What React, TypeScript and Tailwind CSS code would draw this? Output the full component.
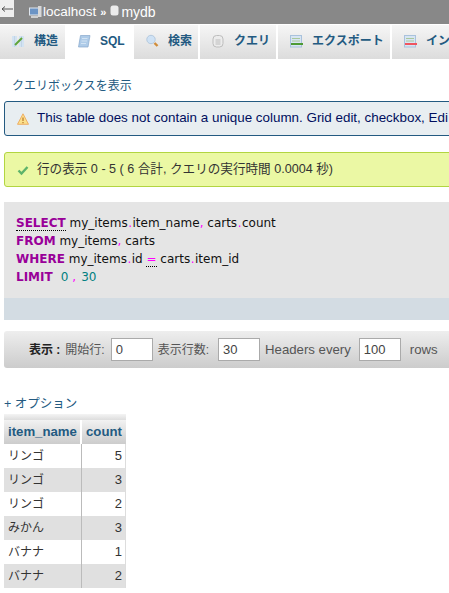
import React from "react";

const cjk = "font-['Liberation_Sans','Noto_Sans_CJK_JP',sans-serif]";

function TabIcon({ name }: { name: string }) {
  if (name === "struct")
    return (
      <svg width="16" height="16" viewBox="0 0 16 16">
        <rect x="2" y="3" width="5" height="11" fill="#d3e3f2" />
        <rect x="9" y="3" width="5" height="11" fill="#d3e3f2" />
        <path d="M4.500 3v11M11.500 3v11" stroke="#b9cee2" strokeWidth="0.7" />
        <path d="M5 12 L12 5" stroke="#5fa53a" strokeWidth="2" />
      </svg>
    );
  if (name === "sql")
    return (
      <svg width="16" height="16" viewBox="0 0 16 16">
        <path d="M4.500 2.500h9.500l-2 11.500H2.500z" fill="#aecbe8" stroke="#86a8cc" strokeWidth="0.7" />
        <path d="M6 5.500h5.500M5.500 8h5.500M5 10.500h5" stroke="#dbe8f5" strokeWidth="0.8" />
      </svg>
    );
  if (name === "search")
    return (
      <svg width="16" height="16" viewBox="0 0 16 16">
        <circle cx="7" cy="6.500" r="4.200" fill="#cfe2f5" stroke="#b4c9de" />
        <path d="M10.500 10l3 3" stroke="#d08c3a" strokeWidth="2.400" />
      </svg>
    );
  if (name === "query")
    return (
      <svg width="16" height="16" viewBox="0 0 16 16">
        <rect x="3" y="2.500" width="10" height="11.500" rx="3.500" fill="#ececec" stroke="#bdbdbd" />
        <rect x="5.500" y="6" width="5" height="6" fill="#d4d4d4" />
      </svg>
    );
  return (
    <svg width="16" height="16" viewBox="0 0 16 16">
      <rect x="2.500" y="2.500" width="11" height="11.500" fill="#d7e5f3" stroke="#a9c2dc" />
      <path d="M4 5.500h8M4 8h8" stroke="#a9c89a" />
      <path d="M3 11h12" stroke={name === "export" ? "#4d9a35" : "#f0555f"} strokeWidth="2" />
    </svg>
  );
}

const tabs = [
  { name: "struct", label: "構造", w: "w-[67px]", pl: "pl-[10px]" },
  { name: "sql", label: "SQL", w: "w-[67px]", pl: "pl-[9px]", active: true },
  { name: "search", label: "検索", w: "w-[66px]", pl: "pl-[10px]" },
  { name: "query", label: "クエリ", w: "w-[78px]", pl: "pl-[10px]" },
  { name: "export", label: "エクスポート", w: "w-[114px]", pl: "pl-[10px]" },
  { name: "import", label: "インポート", w: "w-[100px]", pl: "pl-[10px]" },
];

const rows: [string, number][] = [
  ["リンゴ", 5],
  ["リンゴ", 3],
  ["リンゴ", 2],
  ["みかん", 3],
  ["バナナ", 1],
  ["バナナ", 2],
];

export default function App() {
  return (
    <div className={`w-[449px] h-[593px] overflow-hidden bg-white ${cjk} text-[12px] text-black`}>
      {/* top bar */}
      <div className="h-[24px] bg-[#888888] flex items-start text-white">
        <div className="w-[14px] h-[17px] bg-[#eeeeee] flex items-center justify-center">
          <svg width="12" height="8" viewBox="0 0 12 8">
            <path d="M1 4h11M1 4l3-2.500M1 4l3 2.500" fill="none" stroke="#444" strokeWidth="0.9" />
          </svg>
        </div>
        <div className="ml-[15px] h-[24px] flex items-center">
          <svg width="13" height="15" viewBox="0 0 13 15">
            <rect x="0.500" y="3" width="9" height="7" fill="#6c94c4" stroke="#dfe6ee" />
            <rect x="9" y="1" width="3.500" height="11" fill="#d8d8d8" />
            <rect x="2" y="11" width="7" height="2" fill="#cfcfcf" />
          </svg>
          <span className="ml-[1px] text-[13.500px]">localhost</span>
          <span className="ml-[4px] text-[11px] font-bold">»</span>
          <svg className="ml-[4px] -mt-[3px]" width="9" height="11" viewBox="0 0 9 11">
            <rect x="0.500" y="0.500" width="8" height="10" rx="2.500" fill="#ececec" />
          </svg>
          <span className="ml-[2px] text-[14px]">mydb</span>
        </div>
      </div>

      {/* tabs */}
      <div className="mt-[1px] h-[34px] flex overflow-hidden">
        {tabs.map((t) => (
          <div
            key={t.name}
            className={`${t.w} ${t.pl} shrink-0 h-[34px] flex items-center gap-[8px] pb-[2px] border-r-2 border-white font-bold text-[12px] text-[#235a81] ${t.active ? "bg-white" : "bg-gradient-to-b from-[#f6f6f6] to-[#dcdcdc]"}`}
          >
            <TabIcon name={t.name} />
            <span className="whitespace-nowrap">{t.label}</span>
          </div>
        ))}
      </div>

      <div className="mt-[19px] ml-[12px] h-[16px] leading-[16px] text-[12px] text-[#235a81]">クエリボックスを表示</div>

      {/* notice */}
      <div className="mt-[7px] ml-[4px] w-[480px] h-[35px] flex items-center pl-[12px] gap-[8px] rounded-[3px] border border-[#235a81] bg-[#e8eef1] text-[#000e5e] text-[13.400px] whitespace-nowrap">
        <svg className="shrink-0" width="12" height="12" viewBox="0 0 12 12">
          <path d="M6 .8 11.500 11.300H.5z" fill="#fbe08c" stroke="#eda85c" strokeWidth="0.9" />
          <path d="M6 4.500v3.500M6 9v1.200" stroke="#b8742a" strokeWidth="1.200" />
        </svg>
        <span>This table does not contain a unique column. Grid edit, checkbox, Edi</span>
      </div>

      {/* success */}
      <div className="mt-[16px] ml-[4px] w-[460px] h-[35px] flex items-center pl-[12px] gap-[8px] rounded-[3px] border border-[#b2d541] bg-[#ebf8a4] text-[#333] text-[12.600px] whitespace-nowrap">
        <svg className="shrink-0" width="12" height="12" viewBox="0 0 12 12">
          <path d="M1.500 6.500 4.500 9.500 10.500 3" fill="none" stroke="#5db36a" strokeWidth="2.400" />
        </svg>
        <span>行の表示 0 - 5 ( 6 合計, クエリの実行時間 0.0004 秒)</span>
      </div>

      {/* sql box */}
      <div className="mt-[15px] ml-[4px] w-[460px] h-[118px] bg-[#e5e5e5] flex flex-col">
        <div className="flex-1 pt-[12px] pl-[12px] font-['DejaVu_Sans',sans-serif] text-[12px] leading-[18px] text-[#111] whitespace-nowrap">
          <div>
            <span className="font-bold text-[#990099] border-b border-dotted border-black">SELECT</span> my_items<span className="text-[#ff00ff] mx-[0.500px]">.</span>item_name<span className="text-[#ff00ff]">,</span> carts<span className="text-[#ff00ff] mx-[0.500px]">.</span>count
          </div>
          <div>
            <span className="font-bold text-[#990099]">FROM</span> my_items<span className="text-[#ff00ff]">,</span> carts
          </div>
          <div>
            <span className="font-bold text-[#990099]">WHERE</span> my_items<span className="text-[#ff00ff] mx-[0.500px]">.</span>id <span className="text-[#ff00ff] border-b border-dotted border-black">=</span> carts<span className="text-[#ff00ff] mx-[0.500px]">.</span>item_id
          </div>
          <div>
            <span className="font-bold text-[#990099]">LIMIT</span>
            <span className="ml-[8px] text-[#008080]">0</span>
            <span className="ml-[4px] text-[#ff00ff]">,</span>
            <span className="ml-[5px] text-[#008080]">30</span>
          </div>
        </div>
        <div className="h-[22px] bg-[#d3dce3]" />
      </div>

      {/* nav form */}
      <div className="mt-[11px] ml-[4px] w-[460px] h-[37px] rounded-[3px] bg-gradient-to-b from-[#eeeeee] to-[#cccccc] flex items-center pl-[25px] text-[12px] text-[#555] whitespace-nowrap">
        <span className="font-bold text-[#222]">表示 :</span>
        <span className="ml-[5px]">開始行:</span>
        <div className="ml-[6px] w-[42px] h-[23px] border border-[#aaaaaa] bg-white flex items-center pl-[4px] text-[13px] text-[#444]">0</div>
        <span className="ml-[5px]">表示行数:</span>
        <div className="ml-[9px] w-[42px] h-[23px] border border-[#aaaaaa] bg-white flex items-center pl-[4px] text-[13px] text-[#444]">30</div>
        <span className="ml-[5px] text-[13.200px]">Headers every</span>
        <div className="ml-[8px] w-[42px] h-[23px] border border-[#aaaaaa] bg-white flex items-center pl-[4px] text-[13px] text-[#444]">100</div>
        <span className="ml-[9px] text-[13.200px]">rows</span>
      </div>

      <div className="mt-[28px] ml-[4px] h-[16px] leading-[16px] text-[#235a81] text-[12.500px]">+ オプション</div>

      {/* results */}
      <div className="mt-[2px] ml-[4px] w-[122px]">
        <div className="h-[6px] bg-gradient-to-b from-[#f4f4f4] to-[#dddddd]" />
        <div className="h-[24px] flex font-bold text-[13.200px] text-[#235a81] bg-gradient-to-b from-[#f2f2f2] to-[#cccccc]">
          <div className="w-[78px] pl-[4px] flex items-center border-r-2 border-white">item_name</div>
          <div className="flex-1 pl-[4px] flex items-center">count</div>
        </div>
        {rows.map(([name, n], i) => (
          <div key={i} className={`h-[24px] flex items-center text-[12px] text-[#333] ${i % 2 === 1 ? "bg-[#e0e0e0]" : "bg-white"}`}>
            <div className="w-[78px] h-full pl-[4px] flex items-center border-r border-[#bbbbbb]">{name}</div>
            <div className="flex-1 h-full pr-[3px] flex items-center justify-end border-r border-[#dddddd] text-[13px]">{n}</div>
          </div>
        ))}
      </div>
    </div>
  );
}
